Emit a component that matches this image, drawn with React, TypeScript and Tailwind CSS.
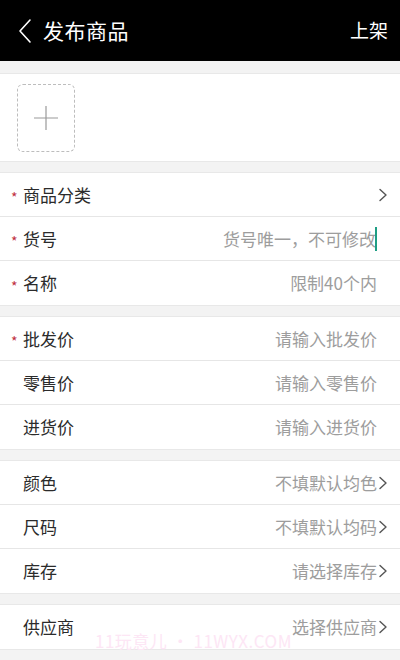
import type { ReactNode } from "react";

type Row = {
  label: string;
  required?: boolean;
  value?: string;
  arrow?: boolean;
  cursor?: boolean;
};

const groups: Row[][] = [
  [
    { label: "商品分类", required: true, arrow: true },
    { label: "货号", required: true, value: "货号唯一，不可修改", cursor: true },
    { label: "名称", required: true, value: "限制40个内" },
  ],
  [
    { label: "批发价", required: true, value: "请输入批发价" },
    { label: "零售价", value: "请输入零售价" },
    { label: "进货价", value: "请输入进货价" },
  ],
  [
    { label: "颜色", value: "不填默认均色", arrow: true },
    { label: "尺码", value: "不填默认均码", arrow: true },
    { label: "库存", value: "请选择库存", arrow: true },
  ],
  [{ label: "供应商", value: "选择供应商", arrow: true }],
];

function Chevron() {
  return (
    <svg width="10" height="14" viewBox="0 0 10 14" fill="none">
      <path d="M2 1.5 L8 7 L2 12.5" stroke="#555" strokeWidth="1.4" strokeLinecap="round" strokeLinejoin="round" />
    </svg>
  );
}

function FormRow({ row }: { row: Row }) {
  return (
    <div className="flex h-[44px] items-center border-b border-[#e6e6e6] bg-white pl-[11px] pr-[12px] last:border-b-0">
      <span className="mt-[5px] w-[12px] text-[14px] leading-none text-[#c0303f]">{row.required ? "*" : ""}</span>
      <span className="text-[17px] text-[#2b2b2b]">{row.label}</span>
      <div className="ml-auto flex items-center">
        {row.value && <span className="text-[17px] text-[#9d9d9d]">{row.value}</span>}
        {row.cursor && <span className="-ml-[1px] h-[24px] w-[2px] bg-[#1e9e84]" />}
        <span className="flex w-[11px] items-center justify-end">{row.arrow && <Chevron />}</span>
      </div>
    </div>
  );
}

function Section({ children }: { children: ReactNode }) {
  return <div className="border-y border-[#e8e8e8] bg-white">{children}</div>;
}

export default function App() {
  return (
    <div
      className="relative min-h-[660px] w-[400px] bg-[#f3f3f3]"
      style={{ fontFamily: '"Noto Sans CJK SC", "Noto Sans", sans-serif' }}
    >
      <header className="flex h-[61px] items-center bg-black pl-[17px] pr-[12px] text-white">
        <svg width="16" height="26" viewBox="0 0 16 26" fill="none">
          <path d="M13 2 L3 13 L13 24" stroke="#fff" strokeWidth="1.6" strokeLinecap="round" strokeLinejoin="round" />
        </svg>
        <span className="ml-[10px] text-[21px] tracking-[0.5px]">发布商品</span>
        <span className="ml-auto text-[19px]">上架</span>
      </header>

      <div className="mt-[12px] flex flex-col gap-[10px]">
        <Section>
          <div className="h-[87px] pl-[17px] pt-[10px]">
            <div className="flex h-[68px] w-[58px] items-center justify-center rounded-[6px] border-[1.5px] border-dashed border-[#bdbdbd]">
              <svg width="26" height="26" viewBox="0 0 26 26">
                <path d="M13 1 V25 M1 13 H25" stroke="#9a9a9a" strokeWidth="1.2" />
              </svg>
            </div>
          </div>
        </Section>
        {groups.map((g, i) => (
          <Section key={i}>
            {g.map((r) => (
              <FormRow key={r.label} row={r} />
            ))}
          </Section>
        ))}
      </div>

      <div className="absolute left-[95px] top-[628px] text-[17px] tracking-[0.5px] text-[#fde6f5]">
        11玩意儿 • 11WYX.COM
      </div>
    </div>
  );
}
